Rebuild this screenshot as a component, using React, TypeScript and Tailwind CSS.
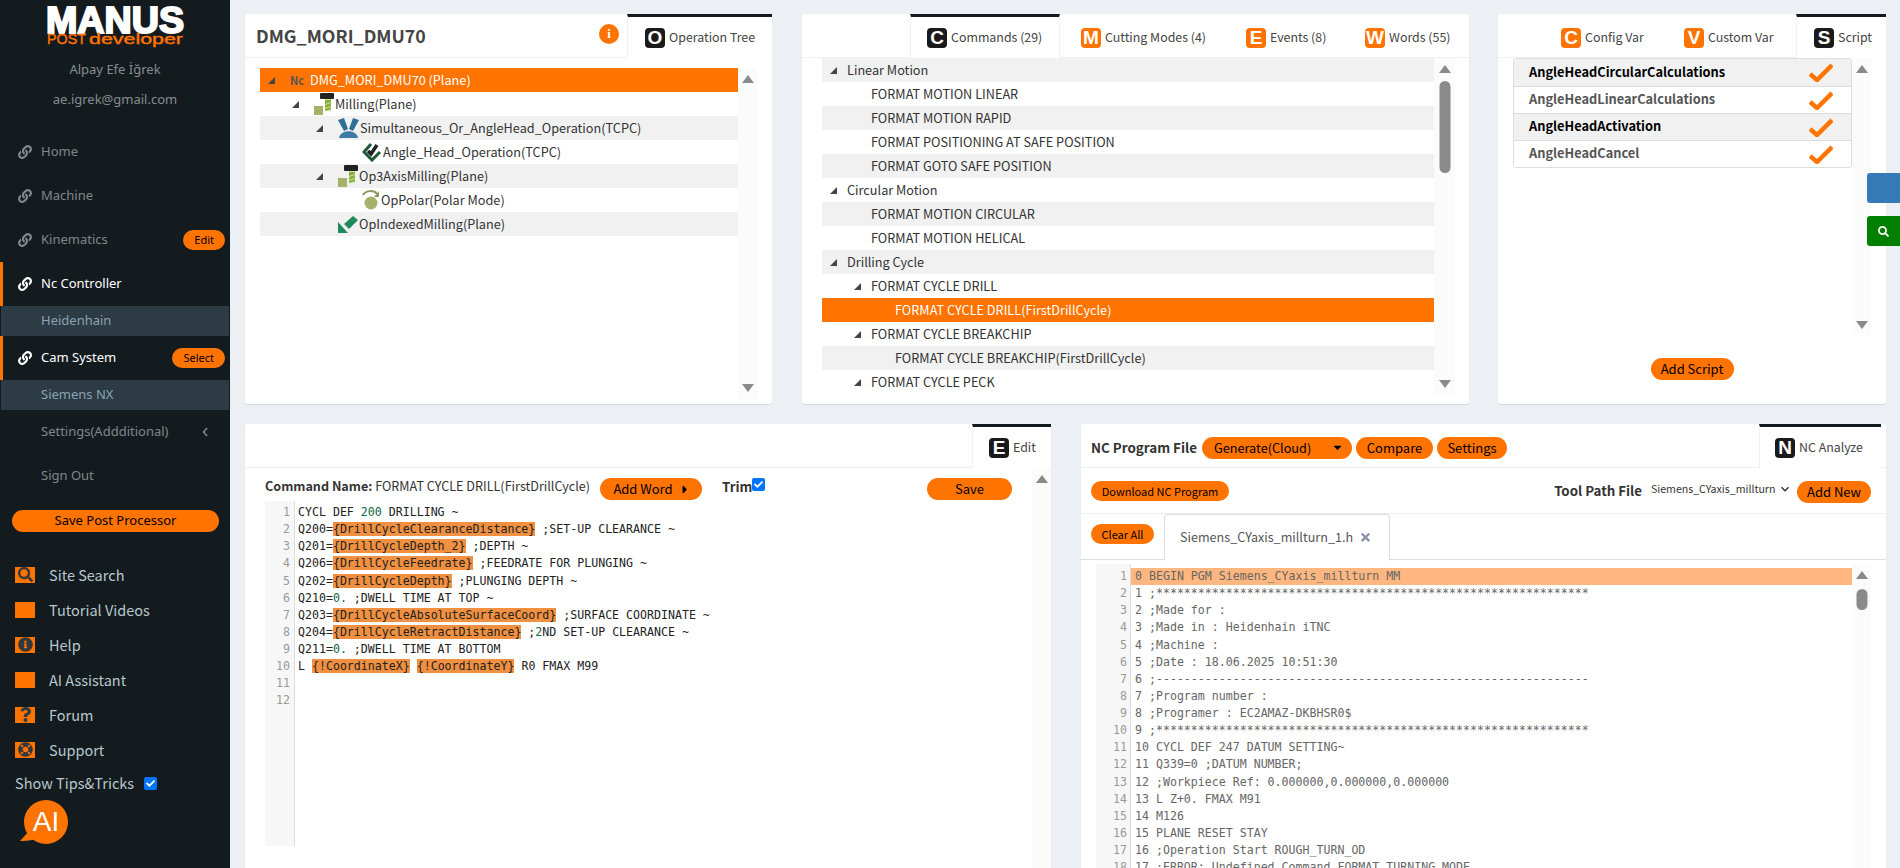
import React from "react";
import { FaLink, FaSearch, FaInfoCircle, FaQuestion, FaLifeRing, FaCheck, FaChevronLeft, FaChevronDown, FaCaretRight, FaCaretDown, FaTimes } from "react-icons/fa";

function Logo() {
  return (
    <div className="h-[50px] pl-[30px]">
      <svg width="170" height="50" viewBox="0 0 170 50" fontFamily="Liberation Sans, sans-serif">
        <text x="16" y="33" fontSize="36" fontWeight="900" fill="#fff" stroke="#fff" strokeWidth="2" textLength="138" lengthAdjust="spacingAndGlyphs">MANUS</text>
        <text x="17" y="44" fontSize="14" fill="#ff7300" stroke="#ff7300" strokeWidth="0.4" textLength="39" lengthAdjust="spacingAndGlyphs">POST</text>
        <text x="59" y="44" fontSize="15" fill="#ff7300" stroke="#ff7300" strokeWidth="0.4" textLength="94" lengthAdjust="spacingAndGlyphs">developer</text>
      </svg>
    </div>
  );
}

function Pill({ children, className = "" }: { children: React.ReactNode; className?: string }) {
  return <span className={`inline-flex items-center rounded-full bg-[#ff7300] text-black whitespace-nowrap ${className}`}>{children}</span>;
}

function NavItem({ label, active, badge }: { label: string; active?: boolean; badge?: string }) {
  return (
    <div className={`h-11 flex items-center pl-[15px] pr-[5px] border-l-[3px] ${active ? "border-[#ff7300] text-white" : "border-transparent text-[#80878c]"}`}>
      <FaLink className="w-[14px] h-[14px] mr-[9px]" />
      <span className="text-[13px] flex-1">{label}</span>
      {badge && <Pill className="h-5 text-[11px] px-[11px] justify-center">{badge}</Pill>}
    </div>
  );
}

function SubItem({ label }: { label: string }) {
  return <div className="h-[30px] ml-px mr-px bg-[#2c3b44] flex items-center pl-[40px] text-[13px] text-[#8ba3b3]">{label}</div>;
}

const CJK = "[font-family:'Noto_Sans_CJK_SC','Noto_Sans',sans-serif]";

function ToolRow({ icon, label }: { icon?: React.ReactNode; label: string }) {
  return (
    <div className={`h-[35px] flex items-center pl-[15px] text-[#b8c7ce] text-[14.5px] ${CJK}`}>
      <span className="w-5 h-4 bg-[#ff7300] mr-[14px] flex items-center justify-center text-[#33383c]">{icon}</span>
      {label}
    </div>
  );
}

function Sidebar() {
  return (
    <aside className="w-[230px] shrink-0 h-full bg-[#141b1f] flex flex-col [font-family:'Noto_Sans',sans-serif]">
      <Logo />
      <div className="text-center text-[13px] text-[#878d91] mt-[4px] h-[30px] leading-[30px]">Alpay Efe İğrek</div>
      <div className="text-center text-[13px] text-[#878d91] h-[30px] leading-[30px]">ae.igrek@gmail.com</div>
      <div className="h-[16px]" />
      <NavItem label="Home" />
      <NavItem label="Machine" />
      <NavItem label="Kinematics" badge="Edit" />
      <NavItem label="Nc Controller" active />
      <SubItem label="Heidenhain" />
      <NavItem label="Cam System" active badge="Select" />
      <SubItem label="Siemens NX" />
      <div className="h-[44px] flex items-center pl-[41px] pr-[21px] text-[13px] text-[#80878c] justify-between">
        <span>Settings(Addditional)</span>
        <FaChevronLeft className="w-[8px] h-[10px]" />
      </div>
      <div className="h-[44px] flex items-center pl-[41px] text-[13px] text-[#80878c]">Sign Out</div>
      <div className="ml-3 mr-[11px] mt-[12px]">
        <div className="h-[22px] rounded-full bg-[#ff7300] text-black text-[13px] flex items-center justify-center">Save Post Processor</div>
      </div>
      <div className="h-[25px]" />
      <ToolRow label="Site Search" icon={<FaSearch className="w-[15px] h-[15px]" />} />
      <ToolRow label="Tutorial Videos" />
      <ToolRow label="Help" icon={<FaInfoCircle className="w-[15px] h-[15px]" />} />
      <ToolRow label="AI Assistant" />
      <ToolRow label="Forum" icon={<FaQuestion className="w-[13px] h-[15px]" />} />
      <ToolRow label="Support" icon={<FaLifeRing className="w-[15px] h-[15px]" />} />
      <div className={`h-[32px] flex items-center pl-[15px] text-[#b8c7ce] text-[14.5px] ${CJK}`}>
        Show Tips&amp;Tricks
        <span className="ml-[10px] w-[13px] h-[13px] rounded-[2px] bg-[#0075ff] flex items-center justify-center text-white"><FaCheck className="w-[9px] h-[9px]" /></span>
      </div>
      <div className="pl-[20px] mt-[1px]">
        <svg width="48" height="44" viewBox="0 0 48 44">
          <circle cx="26" cy="22" r="22" fill="#ff7300" />
          <path d="M10 30 L0 41 C8 41 16 40 22 36 Z" fill="#ff7300" />
          <text x="26" y="31" textAnchor="middle" fontSize="28" fill="#fff" fontFamily="Liberation Sans, sans-serif">AI</text>
        </svg>
      </div>
    </aside>
  );
}

function TabBadge({ ch, dark }: { ch: string; dark?: boolean }) {
  return (
    <span className={`inline-flex items-center justify-center w-5 h-5 rounded-[4px] font-bold text-[19px] leading-none mr-[4px] shrink-0 [font-family:'Liberation_Sans',sans-serif] text-white ${dark ? "bg-[#1a1a1a]" : "bg-[#ff7300]"}`}>{ch}</span>
  );
}

function Tab({ ch, label, active, className = "" }: { ch: string; label: string; active?: boolean; className?: string }) {
  return (
    <div className={`flex items-center text-[#444] text-[12.4px] whitespace-nowrap shrink-0 ${active ? "h-[45px] border-t-[3px] border-[#141b1f] border-l border-l-[#f1f1f1] pb-px -mb-px bg-white" : "h-[44px] pt-[3px]"} ${className}`}>
      <TabBadge ch={ch} dark={active} />
      {label}
    </div>
  );
}

function Panel({ className = "", children }: { className?: string; children: React.ReactNode }) {
  return <section className={`bg-white rounded-[3px] shadow-[0_1px_1px_rgba(0,0,0,0.1)] flex flex-col ${className}`}>{children}</section>;
}

function Tri() {
  return (
    <svg width="7" height="7" viewBox="0 0 7 7" className="shrink-0">
      <path d="M7 0 V7 H0 Z" fill="#444" />
    </svg>
  );
}

function ScrollBar({ className = "", thumbTop = 0, thumbH = 0, wide = 19 }: { className?: string; thumbTop?: number; thumbH?: number; wide?: number }) {
  return (
    <div className={`relative bg-[#fbfbfb] shrink-0 ${className}`} style={{ width: wide }}>
      <div className="absolute left-1/2 -translate-x-1/2 top-[7px] w-0 h-0 border-x-[6px] border-x-transparent border-b-[8px] border-b-[#8a8a8a]" />
      {thumbH > 0 && <div className="absolute left-1/2 -translate-x-1/2 w-[11px] rounded-full bg-[#8a8a8a]" style={{ top: thumbTop, height: thumbH }} />}
      <div className="absolute left-1/2 -translate-x-1/2 bottom-[7px] w-0 h-0 border-x-[6px] border-x-transparent border-t-[8px] border-t-[#8a8a8a]" />
    </div>
  );
}

function ToolIcon() {
  return (
    <svg width="20" height="22" viewBox="0 0 20 22" className="shrink-0">
      <rect x="6" y="0" width="14" height="6" rx="1" fill="#222" />
      <rect x="0" y="13" width="9" height="9" fill="#a6b26a" />
      <rect x="11" y="6" width="6" height="12" fill="#cfe09a" />
      <path d="M11 7h6v2l-6 2zM11 12l6-2v3l-6 2zM11 16l6-2v2l-6 2z" fill="#86b03a" />
    </svg>
  );
}
function HeadIcon() {
  return (
    <svg width="21" height="20" viewBox="0 0 21 20" className="shrink-0">
      <path d="M0 2 L6 0 L10 11 L6 13Z M21 2 L15 0 L11 11 L15 13Z" fill="#2f6f96" />
      <path d="M1 20 C2 11 19 11 20 20Z" fill="#3b7da6" />
    </svg>
  );
}
function CheckDiamond() {
  return (
    <svg width="20" height="20" viewBox="0 0 20 20" className="shrink-0">
      <path d="M9 2 L2 10 L10 18 L18 10" stroke="#1f5a38" strokeWidth="3" fill="none" />
      <path d="M6 9 L9 12 L15 3" stroke="#222" strokeWidth="3.5" fill="none" />
    </svg>
  );
}
function PolarIcon() {
  return (
    <svg width="18" height="20" viewBox="0 0 18 20" className="shrink-0">
      <path d="M1 5 C4 0 12 0 15 4" stroke="#8a9a5a" strokeWidth="2" fill="none" />
      <path d="M17 1 V7 H12Z" fill="#8a9a5a" />
      <circle cx="9" cy="13" r="6.5" fill="#a6b26a" />
    </svg>
  );
}
function IndexIcon() {
  return (
    <svg width="20" height="17" viewBox="0 0 20 17" className="shrink-0">
      <path d="M0 6 L10 17 H0Z" fill="#1f8a5e" />
      <path d="M6 8 L15 0 L20 4 L11 13Z" fill="#1f8a5e" />
    </svg>
  );
}

type TreeR = { indent: number; tri?: boolean; icon?: React.ReactNode; label: string; sel?: boolean };
const treeRows: TreeR[] = [
  { indent: 0, tri: true, icon: <span className="font-bold text-[11px] text-[#555] w-[16px] mr-[3px]">Nc</span>, label: "DMG_MORI_DMU70 (Plane)", sel: true },
  { indent: 24, tri: true, icon: <ToolIcon />, label: "Milling(Plane)" },
  { indent: 48, tri: true, icon: <HeadIcon />, label: "Simultaneous_Or_AngleHead_Operation(TCPC)" },
  { indent: 72, icon: <CheckDiamond />, label: "Angle_Head_Operation(TCPC)" },
  { indent: 48, tri: true, icon: <ToolIcon />, label: "Op3AxisMilling(Plane)" },
  { indent: 72, icon: <PolarIcon />, label: "OpPolar(Polar Mode)" },
  { indent: 48, icon: <IndexIcon />, label: "OpIndexedMilling(Plane)" },
];

function TreePanel() {
  return (
    <Panel className="w-[527px] h-[390px]">
      <div className="flex h-[44px] border-b border-[#f1f1f1]">
        <div className="flex-1 flex items-center justify-between pl-[11px] pr-[8px]">
          <span className="font-bold text-[#444] text-[17.8px]">DMG_MORI_DMU70</span>
          <span className="w-5 h-5 rounded-full bg-[#ff7300] text-white flex items-center justify-center mb-[3px]"><span className="font-bold text-[13px] [font-family:'Liberation_Serif',serif]">i</span></span>
        </div>
        <Tab ch="O" label="Operation Tree" active className="w-[145px] pl-[17px]" />
      </div>
      <div className="flex pl-[15px] pt-[10px] flex-1 min-h-0 pb-[5px]">
        <div className="w-[478px] flex flex-col">
          {treeRows.map((r, i) => (
            <div key={i} className={`h-6 flex items-center text-[12.7px] ${r.sel ? "bg-[#ff7300] text-white" : i % 2 === 0 ? "bg-[#f1f1f1] text-[#333]" : "bg-white text-[#333]"}`}>
              <div className="flex items-center shrink-0" style={{ paddingLeft: r.indent + 8 }}>
                <span className="w-[22px] shrink-0">{r.tri && <Tri />}</span>
                <span className="flex items-center mr-[1px]">{r.icon}</span>
              </div>
              <span className="whitespace-nowrap">{r.label}</span>
            </div>
          ))}
        </div>
        <ScrollBar className="h-full" />
      </div>
    </Panel>
  );
}

type CmdR = { lvl: number; tri?: boolean; label: string; sel?: boolean };
const cmdRows: CmdR[] = [
  { lvl: 0, tri: true, label: "Linear Motion" },
  { lvl: 1, label: "FORMAT MOTION LINEAR" },
  { lvl: 1, label: "FORMAT MOTION RAPID" },
  { lvl: 1, label: "FORMAT POSITIONING AT SAFE POSITION" },
  { lvl: 1, label: "FORMAT GOTO SAFE POSITION" },
  { lvl: 0, tri: true, label: "Circular Motion" },
  { lvl: 1, label: "FORMAT MOTION CIRCULAR" },
  { lvl: 1, label: "FORMAT MOTION HELICAL" },
  { lvl: 0, tri: true, label: "Drilling Cycle" },
  { lvl: 1, tri: true, label: "FORMAT CYCLE DRILL" },
  { lvl: 2, label: "FORMAT CYCLE DRILL(FirstDrillCycle)", sel: true },
  { lvl: 1, tri: true, label: "FORMAT CYCLE BREAKCHIP" },
  { lvl: 2, label: "FORMAT CYCLE BREAKCHIP(FirstDrillCycle)" },
  { lvl: 1, tri: true, label: "FORMAT CYCLE PECK" },
];

function CommandsPanel() {
  return (
    <Panel className="w-[667px] h-[390px]">
      <div className="flex h-[44px] border-b border-[#f1f1f1] pl-[108px]">
        <Tab ch="C" label="Commands (29)" active className="w-[150px] pl-[16px] border-r border-r-[#f1f1f1]" />
        <Tab ch="M" label="Cutting Modes (4)" className="w-[165px] pl-[21px]" />
        <Tab ch="E" label="Events (8)" className="w-[119px] pl-[21px]" />
        <Tab ch="W" label="Words (55)" className="w-[125px] pl-[21px]" />
      </div>
      <div className="flex pl-[20px] h-[337px]">
        <div className="w-[612px] flex flex-col overflow-hidden">
          {cmdRows.map((r, i) => (
            <div key={i} className={`h-6 shrink-0 flex items-center text-[12.7px] ${r.sel ? "bg-[#ff7300] text-white" : i % 2 === 0 ? "bg-[#f1f1f1] text-[#333]" : "bg-white text-[#333]"}`} style={{ paddingLeft: 8 + r.lvl * 24 }}>
              <span className="w-[17px] shrink-0">{r.tri && <Tri />}</span>
              <span className="whitespace-nowrap">{r.label}</span>
            </div>
          ))}
        </div>
        <ScrollBar className="h-full" wide={21} thumbTop={23} thumbH={92} />
      </div>
    </Panel>
  );
}

function ScriptPanel() {
  const rows = ["AngleHeadCircularCalculations", "AngleHeadLinearCalculations", "AngleHeadActivation", "AngleHeadCancel"];
  return (
    <Panel className="w-[388px] h-[390px]">
      <div className="flex h-[44px] border-b border-[#f1f1f1] pl-[63px]">
        <Tab ch="C" label="Config Var" className="w-[123px]" />
        <Tab ch="V" label="Custom Var" className="w-[112px]" />
        <Tab ch="S" label="Script" active className="w-[90px] pl-[17px]" />
      </div>
      <div className="flex pl-[15px] h-[278px]">
        <div className="w-[339px]">
          <div className="border border-[#ddd] rounded-[3px] overflow-hidden">
            {rows.map((r, i) => (
              <div key={r} className={`h-[27px] flex items-center pl-[15px] pr-[18px] justify-between text-[12.8px] font-bold ${i % 2 === 0 ? "bg-[#f1f1f1] text-black" : "bg-white text-[#555]"} ${i ? "border-t border-[#ddd]" : ""}`}>
                <span className="-mt-[2px]">{r}</span>
                <svg width="24" height="19" viewBox="0 0 24 19"><path d="M1 11 L8 17 L23 2" stroke="#ff7300" strokeWidth="4.5" fill="none" /></svg>
              </div>
            ))}
          </div>
        </div>
        <ScrollBar className="h-full" />
      </div>
      <div className="flex justify-center pt-[22px]">
        <Pill className="h-[22px] w-[83px] text-[13px] justify-center">Add Script</Pill>
      </div>
    </Panel>
  );
}

const H = ({ children }: { children: React.ReactNode }) => <span className="bg-[#f09040]">{children}</span>;
const N = ({ children }: { children: React.ReactNode }) => <span className="text-[#116644]">{children}</span>;

const editLines: React.ReactNode[] = [
  <>CYCL DEF <N>200</N> DRILLING ~</>,
  <>Q200=<H>{"{DrillCycleClearanceDistance}"}</H> ;SET-UP CLEARANCE ~</>,
  <>Q201=<H>{"{DrillCycleDepth_2}"}</H> ;DEPTH ~</>,
  <>Q206=<H>{"{DrillCycleFeedrate}"}</H> ;FEEDRATE FOR PLUNGING ~</>,
  <>Q202=<H>{"{DrillCycleDepth}"}</H> ;PLUNGING DEPTH ~</>,
  <>Q210=<N>0.</N> ;DWELL TIME AT TOP ~</>,
  <>Q203=<H>{"{DrillCycleAbsoluteSurfaceCoord}"}</H> ;SURFACE COORDINATE ~</>,
  <>Q204=<H>{"{DrillCycleRetractDistance}"}</H> ;<N>2</N>ND SET-UP CLEARANCE ~</>,
  <>Q211=<N>0.</N> ;DWELL TIME AT BOTTOM</>,
  <>L <H>{"{!CoordinateX}"}</H> <H>{"{!CoordinateY}"}</H> R0 FMAX M99</>,
  <></>,
  <></>,
];

const MONO = "[font-family:'DejaVu_Sans_Mono','Liberation_Mono',monospace] text-[11.6px]";

function EditPanel() {
  return (
    <Panel className="w-[806px] h-[480px] shrink-0">
      <div className="flex justify-end h-[44px] border-b border-[#f1f1f1]">
        <Tab ch="E" label="Edit" active className="w-[79px] pl-[16px]" />
      </div>
      <div className="flex flex-1 min-h-0">
        <div className="flex-1 pl-[20px] pr-[20px] min-w-0">
          <div className="flex h-[33px] pt-[10px]">
            <div className="text-[12.6px] text-[#333] w-[335px] leading-[20px] -mt-[2px] whitespace-nowrap"><b>Command Name:</b> FORMAT CYCLE DRILL(FirstDrillCycle)</div>
            <Pill className="h-[22px] w-[102px] text-[13px] justify-center">Add Word <FaCaretRight className="ml-2 w-[8px]" /></Pill>
            <div className="ml-[20px] text-[13.3px] font-bold text-[#333] flex items-start leading-[18px]">Trim<span className="w-[13px] h-[13px] rounded-[2px] bg-[#0075ff] text-white flex items-center justify-center"><FaCheck className="w-[9px] h-[9px]" /></span></div>
            <div className="flex-1" />
            <Pill className="h-[22px] w-[85px] text-[13px] justify-center">Save</Pill>
          </div>
          <div className="flex h-[345px] overflow-hidden">
            <div className="w-[30px] bg-[#f7f7f7] border-r border-[#ddd] text-[#999] text-right pr-[4px] pt-[3px]">
              {editLines.map((_, i) => <div key={i} className={`h-[17.14px] leading-[17.14px] ${MONO}`}>{i + 1}</div>)}
            </div>
            <div className="pl-[3px] pt-[3px] text-[#222]">
              {editLines.map((l, i) => <div key={i} className={`h-[17.14px] leading-[17.14px] whitespace-pre ${MONO}`}>{l}</div>)}
            </div>
          </div>
        </div>
        <ScrollBar className="h-full" />
      </div>
    </Panel>
  );
}

const ncLines = [
  "0 BEGIN PGM Siemens_CYaxis_millturn MM",
  "1 ;**************************************************************",
  "2 ;Made for :",
  "3 ;Made in : Heidenhain iTNC",
  "4 ;Machine :",
  "5 ;Date : 18.06.2025 10:51:30",
  "6 ;--------------------------------------------------------------",
  "7 ;Program number :",
  "8 ;Programer : EC2AMAZ-DKBHSR0$",
  "9 ;**************************************************************",
  "10 CYCL DEF 247 DATUM SETTING~",
  "11 Q339=0 ;DATUM NUMBER;",
  "12 ;Workpiece Ref: 0.000000,0.000000,0.000000",
  "13 L Z+0. FMAX M91",
  "14 M126",
  "15 PLANE RESET STAY",
  "16 ;Operation Start ROUGH_TURN_OD",
  "17 ;ERROR: Undefined Command FORMAT_TURNING_MODE",
];

function NcPanel() {
  return (
    <Panel className="w-[805px] h-[480px]">
      <div className="flex h-[44px] border-b border-[#f1f1f1] pr-[5px]">
        <div className="flex-1 flex items-center pl-[10px] gap-[4px] pt-[4px]">
          <b className="text-[13.4px] text-[#333] w-[107px] whitespace-nowrap">NC Program File</b>
          <Pill className="h-[22px] w-[150px] text-[12.7px] justify-between pl-[12px] pr-[10px]">Generate(Cloud) <FaCaretDown className="w-[9px]" /></Pill>
          <Pill className="h-[22px] w-[77px] text-[13px] justify-center">Compare</Pill>
          <Pill className="h-[22px] w-[70px] text-[13px] justify-center">Settings</Pill>
        </div>
        <Tab ch="N" label="NC Analyze" active className="w-[122px] pl-[15px]" />
      </div>
      <div className="h-[46px] border-b border-[#eee] flex items-start pl-[10px] pr-[15px] pt-[13px]">
        <Pill className="h-5 w-[138px] text-[11px] justify-center">Download NC Program</Pill>
        <div className="flex-1" />
        <b className="text-[13.3px] text-[#333] mr-[9px]">Tool Path File</b>
        <span className="text-[10.6px] text-[#333] w-[140px] flex items-center whitespace-nowrap -mt-[2px] leading-[20px]">
          <span className="w-[125px] overflow-hidden">Siemens_CYaxis_millturn_1.h</span>
          <FaChevronDown className="w-[8px] ml-[5px] shrink-0" />
        </span>
        <Pill className="h-[22px] w-[74px] text-[13px] ml-[6px] justify-center">Add New</Pill>
      </div>
      <div className="h-[46px] border-b border-[#ddd] flex pl-[10px] pt-[10px]">
        <Pill className="h-5 w-[63px] text-[11px] justify-center">Clear All</Pill>
        <div className="ml-[10px] -mt-[10px] w-[226px] h-[47px] border border-[#ddd] border-b-white rounded-t-[4px] bg-white flex items-center pl-[15px] text-[12.6px] text-[#555] gap-[8px]">
          Siemens_CYaxis_millturn_1.h <FaTimes className="w-[9px] text-[#8a90a8]" />
        </div>
      </div>
      <div className="flex pl-[15px] pt-[4px] flex-1 min-h-0 overflow-hidden">
        <div className="w-[35px] bg-[#f7f7f7] border-r border-[#ddd] text-[#999] text-right pr-[3px] pt-[4px] shrink-0">
          {ncLines.map((_, i) => <div key={i} className={`h-[17.14px] leading-[17.14px] ${MONO}`}>{i + 1}</div>)}
        </div>
        <div className="w-[721px] pt-[4px] text-[#666] shrink-0">
          {ncLines.map((l, i) => <div key={i} className={`h-[17.14px] leading-[17.14px] pl-[4px] whitespace-pre ${MONO} ${i === 0 ? "bg-[#ffb77f]" : ""}`}>{l}</div>)}
        </div>
        <ScrollBar className="h-full" thumbTop={25} thumbH={21} />
      </div>
    </Panel>
  );
}

export default function App() {
  return (
    <div className="w-[1900px] h-[868px] overflow-hidden flex bg-[#ecf0f5] relative [font-family:'Noto_Sans_CJK_SC','Noto_Sans',sans-serif]">
      <Sidebar />
      <main className="flex-1 pl-[15px] pt-[14px] min-w-0">
        <div className="flex">
          <TreePanel />
          <div className="w-[30px]" />
          <CommandsPanel />
          <div className="w-[29px]" />
          <ScriptPanel />
        </div>
        <div className="flex mt-5">
          <EditPanel />
          <div className="w-[30px]" />
          <NcPanel />
        </div>
      </main>
      <div className="absolute right-0 top-[173px] w-[33px] h-[30px] bg-[#337ab7] rounded-l-[3px]" />
      <div className="absolute right-0 top-[216px] w-[33px] h-[30px] bg-[#008000] rounded-l-[3px] flex items-center justify-center text-white"><FaSearch className="w-[11px] h-[11px]" /></div>
    </div>
  );
}
